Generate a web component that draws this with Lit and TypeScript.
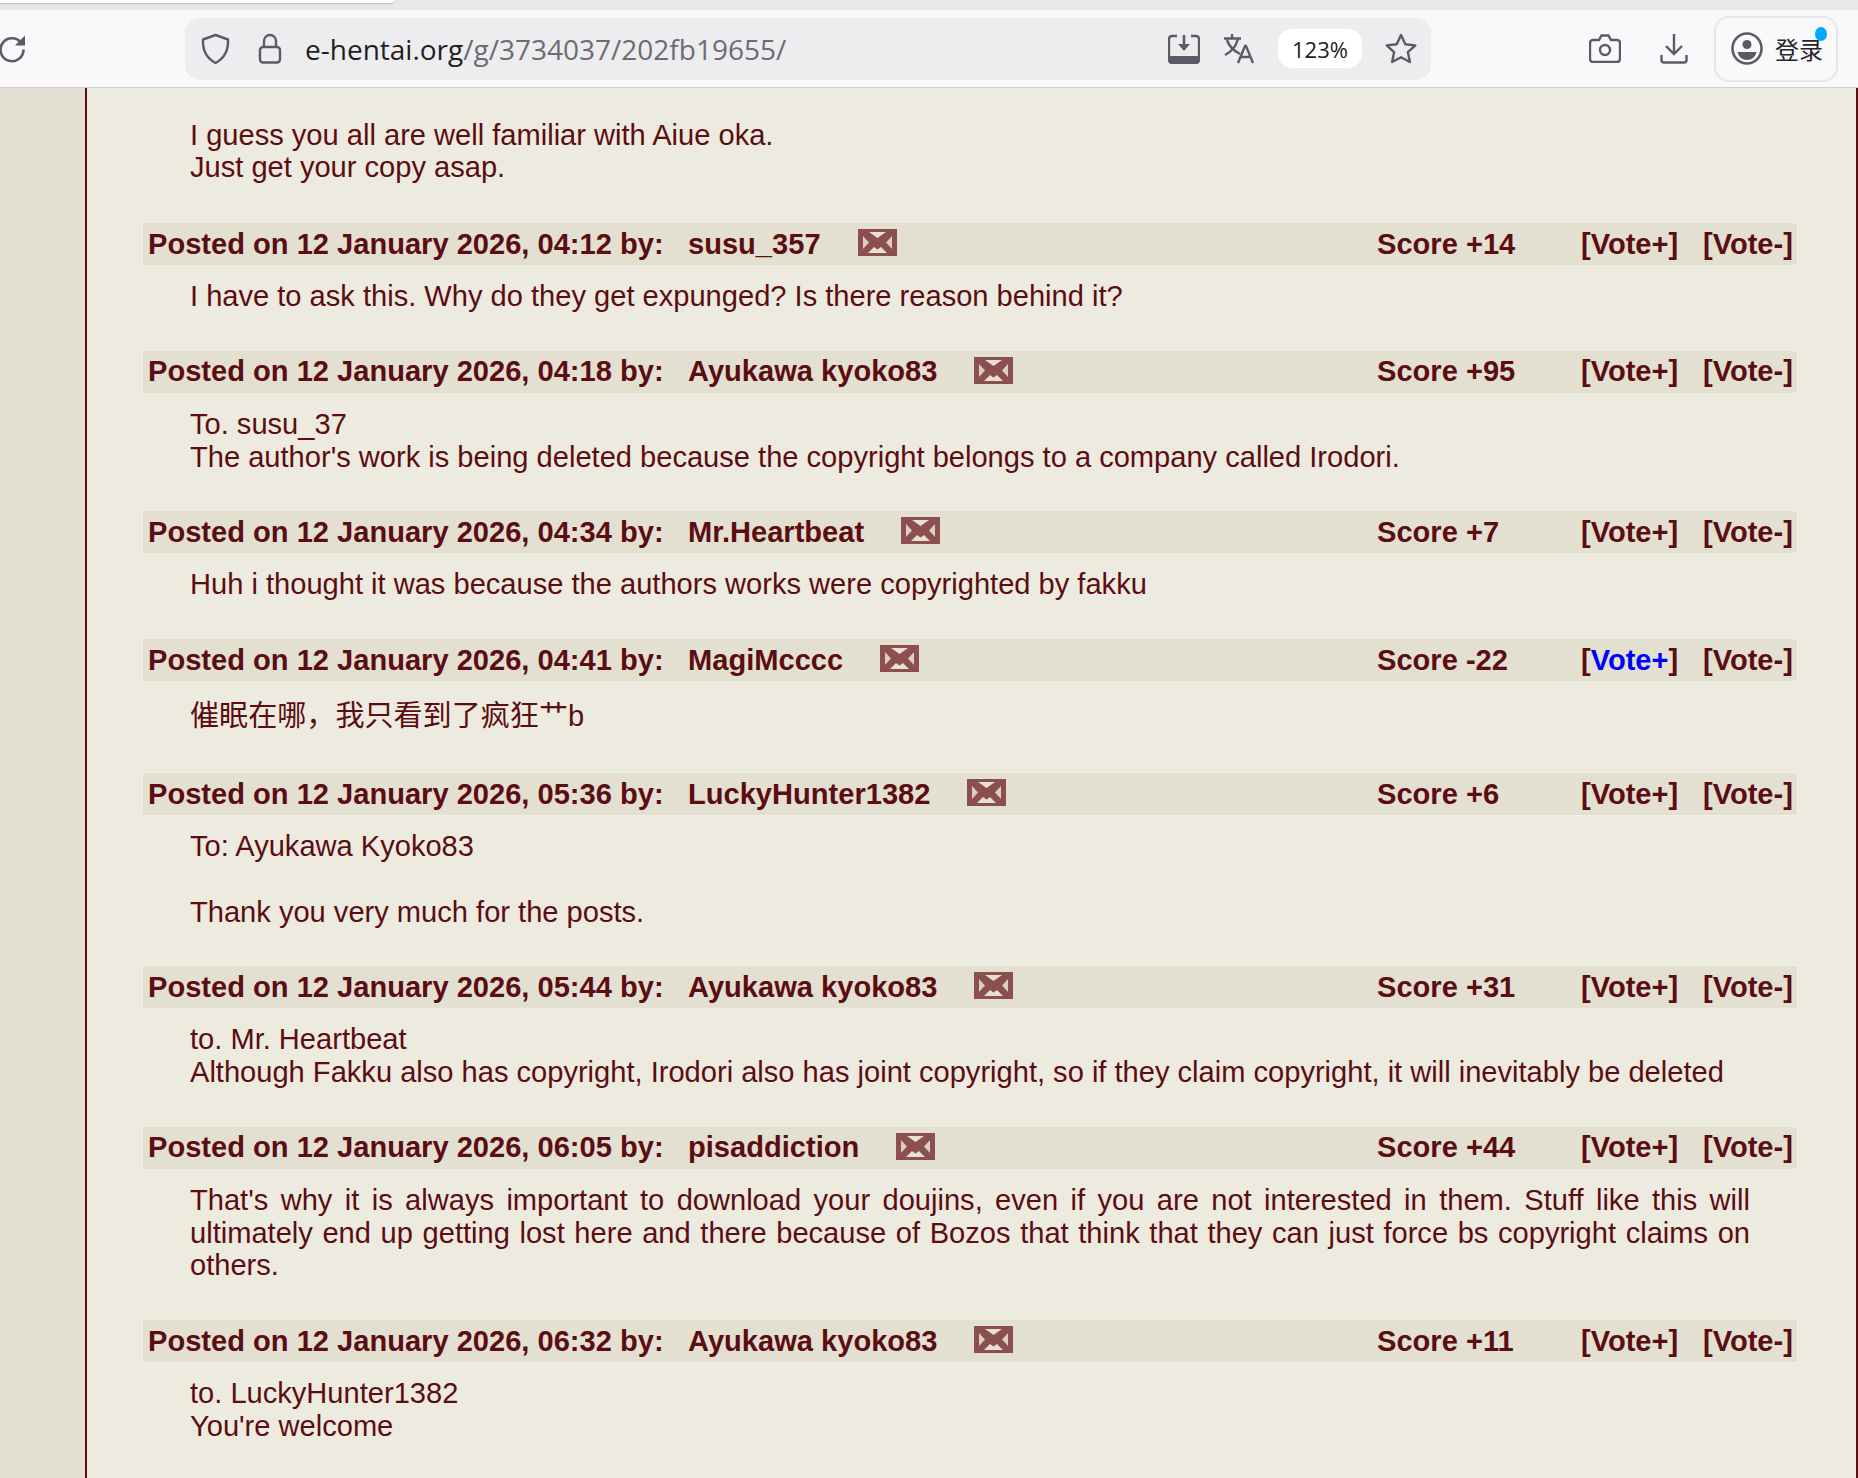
import { LitElement, html, css, svg } from "lit";
import { customElement } from "lit/decorators.js";

interface Post { date: string; name: string; score: string; lines: string[]; hover?: boolean; justify?: boolean; cjk?: boolean; }

const posts: Post[] = [
  { date: "04:12", name: "susu_357", score: "+14", lines: ["I have to ask this. Why do they get expunged? Is there reason behind it?"] },
  { date: "04:18", name: "Ayukawa kyoko83", score: "+95", lines: ["To. susu_37", "The author's work is being deleted because the copyright belongs to a company called Irodori."] },
  { date: "04:34", name: "Mr.Heartbeat", score: "+7", lines: ["Huh i thought it was because the authors works were copyrighted by fakku"] },
  { date: "04:41", name: "MagiMcccc", score: "-22", hover: true, cjk: true, lines: ["催眠在哪，我只看到了疯狂艹b"] },
  { date: "05:36", name: "LuckyHunter1382", score: "+6", lines: ["To: Ayukawa Kyoko83", "", "Thank you very much for the posts."] },
  { date: "05:44", name: "Ayukawa kyoko83", score: "+31", lines: ["to. Mr. Heartbeat", "Although Fakku also has copyright, Irodori also has joint copyright, so if they claim copyright, it will inevitably be deleted"] },
  { date: "06:05", name: "pisaddiction", score: "+44", justify: true, lines: ["That's why it is always important to download your doujins, even if you are not interested in them. Stuff like this will ultimately end up getting lost here and there because of Bozos that think that they can just force bs copyright claims on others."] },
  { date: "06:32", name: "Ayukawa kyoko83", score: "+11", lines: ["to. LuckyHunter1382", "You're welcome"] },
];

const mail = html`<svg class="mail" viewBox="0 0 39 27">
  <rect width="39" height="27" fill="#8c4f50"/>
  <g style="filter: blur(0.6px)">
    <path d="M11 3h17L19.500 9z" fill="#e6e1d3"/>
    <path d="M5 7l6 6.500L5 20zM34 7l-6 6.500 6 6.500z" fill="#d9d0c3"/>
    <path d="M10 24l6-6 3.500 2.500L23 18l6 6z" fill="#e6e1d3"/>
  </g>
</svg>`;

@customElement("app-root")
export class AppRoot extends LitElement {
  static styles = css`
    :host { display: block; height: 1478px; overflow: hidden; font-family: "Liberation Sans", Arial, "Noto Sans CJK SC", sans-serif; background: #edebdf; }
    .tabs { height: 10px; background: #e9e9ec; }
    .tab { width: 394px; height: 3px; background: #fff; border-radius: 0 0 6px 0; box-shadow: 0 1px 2px #0003; }
    .toolbar { background: #f9f9fb; border-bottom: 1px solid #cfcfd2; display: flex; align-items: center; box-sizing: content-box; height: 77px; }
    .reload { margin-right: 160px; width: 25px; height: 30px; flex: none; }
    .urlbar { width: 1246px; height: 62px; background: #ededf0; border-radius: 15px; display: flex; align-items: center; flex: none; box-sizing: border-box; padding-left: 16px; }
    .urlbar svg, .toolbar svg { flex: none; display: block; }
    .url { font-family: "Open Sans", sans-serif; font-size: 28px; color: #1f1f22; margin-left: 23px; width: 863px; white-space: nowrap; }
    .url span { color: #6c6c72; }
    .zoom { width: 84px; height: 39px; background: #fff; border-radius: 14px; font: 22px "Open Sans", sans-serif; color: #1c1c20; display: flex; align-items: center; justify-content: center; margin: 0 23px; flex: none; }
    .translate { margin-left: 23px; }
    .camera { margin-left: 158px; }
    .dl { margin-left: 39px; }
    .login { position: relative; margin-left: 26px; width: 124px; height: 66px; border: 2px solid #e6e6ea; border-radius: 15px; box-sizing: border-box; display: flex; align-items: center; padding-left: 15px; gap: 12px; font: 24px "Noto Sans CJK SC", sans-serif; color: #26262a; flex: none; }
    .dot { position: absolute; right: 9px; top: 9px; width: 12px; height: 14px; border-radius: 50%; background: #00a8ff; }
    .page { display: flex; height: 1390px; }
    .gutter { width: 85px; background: #e3e0d1; flex: none; }
    .panel { flex: 1; border-left: 2px solid #5c0d12; border-right: 2px solid #5c0d12; background: #edebdf; color: #5c0d12; padding-top: 30.5px; min-width: 0; }
    .c { margin: 0 104px 0 103px; padding-bottom: 38px; font-size: 29.08px; line-height: 32.75px; min-height: 32.75px; }
    .line { min-height: 32.75px; white-space: nowrap; }
    .just { white-space: normal; text-align: justify; width: 1560px; }
    .cjk { line-height: 39px; padding-top: 1px; padding-bottom: 37px; }
    .bar { margin-left: 56px; margin-right: 59px; height: 42px; background: #e3e0d1; display: flex; align-items: center; padding-left: 5px; font-size: 29.08px; font-weight: 700; white-space: nowrap; box-sizing: border-box; margin-bottom: 15px; outline: 1px solid #f1efe4; }
    .first { padding-bottom: 39px; }
    .posted { width: 540px; flex: none; }
    .who { width: 689px; flex: none; display: flex; align-items: center; gap: 37px; }
    .mail { width: 39px; height: 27px; flex: none; margin-top: -3px; }
    .score { width: 204px; flex: none; }
    .up { width: 122px; flex: none; }
    .up b { color: #0000ff; }
  `;

  private shield = svg`<path d="M14.500 2 L27 6.500 C27.500 17 24 25 14.500 30 C5 25 1.500 17 2 6.500Z" fill="none" stroke="#5b5b66" stroke-width="2.400" stroke-linejoin="round"/>`;

  render() {
    return html`
      <div class="tabs"><div class="tab"></div></div>
      <div class="toolbar">
        <svg class="reload" viewBox="0 0 25 30"><path d="M20.500 8A11.500 11.500 0 1 0 23.500 15.500" fill="none" stroke="#5b5b66" stroke-width="2.600"/><path d="M25 1.500v10H15z" fill="#5b5b66"/></svg>
        <div class="urlbar">
          <svg width="29" height="32" viewBox="0 0 29 32">${this.shield}</svg>
          <svg style="margin-left:28px" width="24" height="31" viewBox="0 0 24 31"><rect x="2" y="14" width="20" height="15.500" rx="3" fill="none" stroke="#5b5b66" stroke-width="2.400"/><path d="M6 14V8a6 6 0 0 1 12 0v6" fill="none" stroke="#5b5b66" stroke-width="2.400"/></svg>
          <div class="url">e-hentai.org<span>/g/3734037/202fb19655/</span></div>
          <svg width="32" height="30" viewBox="0 0 32 30"><path d="M9 2H4a3 3 0 0 0-3 3v21a3 3 0 0 0 3 3h24a3 3 0 0 0 3-3V5a3 3 0 0 0-3-3h-5" fill="none" stroke="#5b5b66" stroke-width="2.400"/><path d="M1 22h30v5a2 2 0 0 1-2 2H3a2 2 0 0 1-2-2z" fill="#5b5b66"/><path d="M16 1v10" stroke="#5b5b66" stroke-width="2.600"/><path d="M10 10h12l-6 7z" fill="#5b5b66"/></svg>
          <svg class="translate" width="32" height="31" viewBox="0 0 32 31"><path d="M1 5.500h17M9 1v4.500M15 6C13 13 8 19 2 22M4 7c2 6 7 11 13 14M15 30l7-17h1l7 17M18 24h10" fill="none" stroke="#5b5b66" stroke-width="2.400"/></svg>
          <div class="zoom">123%</div>
          <svg width="32" height="31" viewBox="0 0 32 31"><path d="M16 2l4.300 9.200 10 1.200-7.400 6.800 2 9.800L16 24.200 7.100 29l2-9.800L1.700 12.400l10-1.200z" fill="none" stroke="#5b5b66" stroke-width="2.400" stroke-linejoin="round"/></svg>
        </div>
        <svg class="camera" width="32" height="29" viewBox="0 0 32 29"><path d="M4 6h6l2.500-4.500h7L22 6h6a3 3 0 0 1 3 3v16a3 3 0 0 1-3 3H4a3 3 0 0 1-3-3V9a3 3 0 0 1 3-3z" fill="none" stroke="#5b5b66" stroke-width="2.400"/><circle cx="16" cy="16" r="5" fill="none" stroke="#5b5b66" stroke-width="2.400"/></svg>
        <svg class="dl" width="28" height="31" viewBox="0 0 28 31"><path d="M14 1v20M6 13l8 8 8-8M1.500 22v5a2.500 2.500 0 0 0 2.500 2.500h20a2.500 2.500 0 0 0 2.500-2.500v-5" fill="none" stroke="#5b5b66" stroke-width="2.400"/></svg>
        <div class="login">
          <svg width="32" height="33" viewBox="0 0 32 33"><ellipse cx="16" cy="16.500" rx="14.500" ry="15" fill="none" stroke="#5b5b66" stroke-width="2.600"/><circle cx="16" cy="12.500" r="4.500" fill="#5b5b66"/><path d="M6.500 20h19c-1 5-5 8-9.500 8s-8.500-3-9.500-8z" fill="#5b5b66"/></svg>
          <span>登录</span><i class="dot"></i>
        </div>
      </div>
      <div class="page">
        <div class="gutter"></div>
        <div class="panel">
          <div class="c first">
            <div class="line">I guess you all are well familiar with Aiue oka.</div>
            <div class="line">Just get your copy asap.</div>
          </div>
          ${posts.map((p) => html`
            <div class="bar">
              <div class="posted">Posted on 12 January 2026, ${p.date} by:</div>
              <div class="who"><span>${p.name}</span>${mail}</div>
              <div class="score">Score ${p.score}</div>
              <div class="up">[${p.hover ? html`<b>Vote+</b>` : "Vote+"}]</div>
              <div>[Vote-]</div>
            </div>
            <div class="c ${p.cjk ? "cjk" : ""}">
              ${p.lines.map((l) => html`<div class="line ${p.justify ? "just" : ""}">${l}</div>`)}
            </div>
          `)}
        </div>
      </div>
    `;
  }
}
